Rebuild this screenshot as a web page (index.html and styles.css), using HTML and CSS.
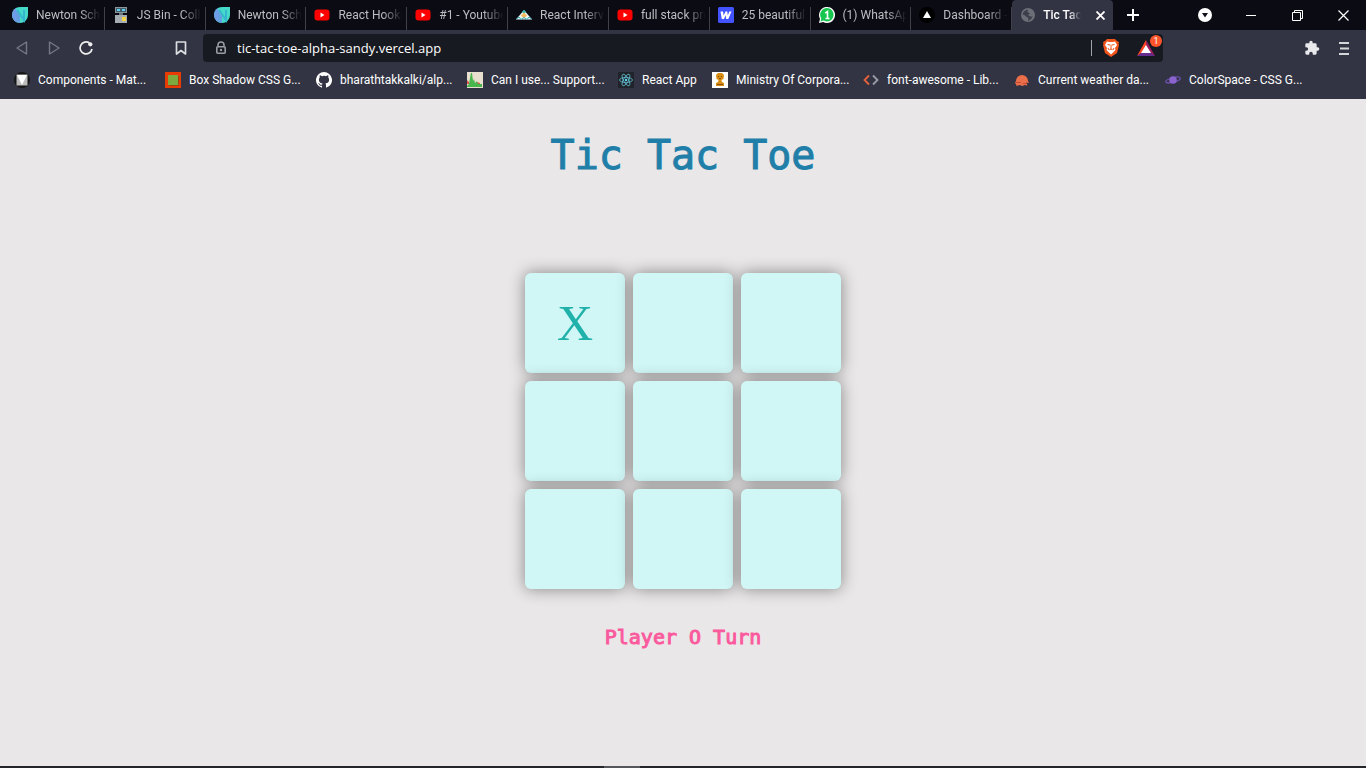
FILE: index.html
```html
<!DOCTYPE html>
<html lang="en">
<head>
<meta charset="utf-8">
<meta name="viewport" content="width=device-width, initial-scale=1">
<title>Tic Tac Toe</title>
<link rel="stylesheet" href="styles.css">
</head>
<body>
<svg class="defs" aria-hidden="true">
  <symbol id="newton" viewBox="0 0 16 16"><path d="M8 0h8v8a8 8 0 1 1-8-8z" fill="#45d9c7"/><path d="M4 1.100v13.800A8 8 0 0 1 4 1.100z" fill="#709be8"/><path d="M5 3l7 10V3" fill="none" stroke="#35b5cf" stroke-width="2"/><path d="M4 3l4 6v7l-4-1z" fill="#669fdf"/></symbol>
  <symbol id="youtube" viewBox="0 0 16 16"><rect y="2.500" x=".5" width="15" height="11" rx="3" fill="#f00"/><path d="M6.500 5.500v5l4-2.500z" fill="#fff"/></symbol>
</svg>
<header class="browser">
  <div class="titlebar">
    <nav class="tabs" aria-label="Tabs">
      <a class="tab" href="#"><svg class="icon"><use href="#newton"/></svg><span>Newton Sch</span></a>
      <a class="tab" href="#"><svg class="icon" viewBox="0 0 16 16"><path d="M2 0h12v6H2z" fill="#8a959c"/><path d="M3 1h10v4H3z" fill="#435b68"/><path d="M4 2h3v2H4zM9 2h3v2H9z" fill="#5ed1f2"/><path d="M6 6h4v2H6z" fill="#65737b"/><path d="M2 8h12v8H2z" fill="#a5adb2"/><path d="M9 10h4v4H9z" fill="#f4d443"/></svg><span>JS Bin - Colla</span></a>
      <a class="tab" href="#"><svg class="icon"><use href="#newton"/></svg><span>Newton Sch</span></a>
      <a class="tab" href="#"><svg class="icon"><use href="#youtube"/></svg><span>React Hooks</span></a>
      <a class="tab" href="#"><svg class="icon"><use href="#youtube"/></svg><span>#1 - Youtube</span></a>
      <a class="tab" href="#"><svg class="icon" viewBox="0 0 16 16"><path d="M8 3l8 9.500H0z" fill="#e9f4ee"/><path d="M6 5l2-2 2 2-2 2z" fill="#30b7b2"/><path d="M8 5.500l3 3-3 3-3-3z" fill="#f5b95d"/><path d="M0 12.500l3-2.500 2 2.500 3-2 3 2 2-2.500 3 2.500" fill="none" stroke="#35a9bd"/></svg><span>React Intervi</span></a>
      <a class="tab" href="#"><svg class="icon"><use href="#youtube"/></svg><span>full stack pro</span></a>
      <a class="tab" href="#"><svg class="icon" viewBox="0 0 16 16"><rect width="16" height="16" rx="1.500" fill="#4353ff"/><path d="M2.500 4.500H5l.7 4L7.500 4.500H9.300l.5 4 1.500-4H13.500L10.300 12H8.200L7.700 8.300 6 12H3.800z" fill="#fff"/></svg><span>25 beautifull</span></a>
      <a class="tab" href="#"><svg class="icon" viewBox="0 0 16 16"><path d="M0 16l1-4.200A8 8 0 1 1 4.200 15z" fill="#fff"/><path d="M1.500 14.500l.8-3A6.700 6.700 0 1 1 4.600 13.600z" fill="#17c64f"/><path d="M6.200 6.200L8.500 4.500v7M6.500 11.500h4" fill="none" stroke="#fff" stroke-width="1.600"/></svg><span>(1) WhatsAp</span></a>
      <a class="tab" href="#"><svg class="icon" viewBox="0 0 16 16"><circle cx="8" cy="8" r="8" fill="#000"/><path d="M8 4l4 7H4z" fill="#fff"/></svg><span>Dashboard -</span></a>
      <div class="tab active"><svg class="icon" viewBox="0 0 16 16"><circle cx="8" cy="8" r="7" fill="#6b6e76"/><path d="M2.500 7.500C3 5 5 3 8 2.500L7.500 5 10 6.500 8 8l2 1.500h2.500L11 12l-3 2 .5-3L6 9.500 4.500 8z" fill="#3b3e4b"/></svg><span>Tic Tac T</span><button class="tab-close" aria-label="Close tab"><svg viewBox="0 0 9 9" width="9" height="9"><path d="M.5.5l8 8m0-8l-8 8" stroke="#fff" stroke-width="1.800"/></svg></button></div>
    </nav>
    <button class="new-tab" aria-label="New tab"><svg viewBox="0 0 12 12" width="12" height="12"><path d="M6 0v12M0 6h12" stroke="#fff" stroke-width="2"/></svg></button>
    <div class="window-controls">
      <button aria-label="Search tabs"><svg viewBox="0 0 14 14" width="14" height="14"><circle cx="7" cy="7" r="7" fill="#fff"/><path d="M4 5h6L7 9.500z" fill="#10101a"/></svg></button>
      <button aria-label="Minimize"><svg viewBox="0 0 11 11" width="11" height="11"><path d="M0 5.500h10" stroke="#fff"/></svg></button>
      <button aria-label="Restore"><svg viewBox="0 0 11 11" width="11" height="11" fill="none" stroke="#fff"><path d="M.5 2.500h8v8h-8zM2.500 2V.5h8v8H9"/></svg></button>
      <button aria-label="Close"><svg viewBox="0 0 11 11" width="11" height="11"><path d="M.5.5l10 10m0-10l-10 10" stroke="#fff" stroke-width="1.200"/></svg></button>
    </div>
  </div>
  <div class="toolbar">
    <button class="tool" aria-label="Back" disabled><svg class="icon" viewBox="0 0 16 16"><path d="M12.500 2v12L3 8z" fill="none" stroke="#747785" stroke-width="1.400" stroke-linejoin="round"/></svg></button>
    <button class="tool" aria-label="Forward" disabled><svg class="icon" viewBox="0 0 16 16"><path d="M3.500 2v12L13 8z" fill="none" stroke="#747785" stroke-width="1.400" stroke-linejoin="round"/></svg></button>
    <button class="tool" aria-label="Reload"><svg class="icon" viewBox="0 0 16 16"><path d="M11.500 3A6 6 0 1 0 14 9" fill="none" stroke="#eee" stroke-width="1.700"/><circle cx="12.300" cy="4.300" r="2.100" fill="#eee"/></svg></button>
    <button class="tool save" aria-label="Bookmark"><svg class="icon" viewBox="0 0 16 16"><path d="M3.500 2h9v12L8 10.500 3.500 14z" fill="none" stroke="#dcdde1" stroke-width="1.700" stroke-linejoin="round"/></svg></button>
    <div class="address">
      <svg class="icon" viewBox="0 0 16 16"><path d="M5 7V5a3 3 0 0 1 6 0v2" fill="none" stroke="#9b9da5" stroke-width="1.500"/><rect x="3.800" y="6.800" width="8.400" height="6.500" rx="1" fill="none" stroke="#9b9da5" stroke-width="1.600"/><circle cx="8" cy="10" r="1.200" fill="#9b9da5"/></svg>
      <input type="text" aria-label="Address" value="tic-tac-toe-alpha-sandy.vercel.app">
      <span class="divider"></span>
      <button aria-label="Brave Shields"><svg viewBox="0 0 16 18" width="16" height="18"><path d="M4 0h8l2 2 2 1-.5 2 .5 1-2 8-6 4-6-4L0 6l.5-1L0 3l2-1z" fill="#f2541b"/><path d="M4 2.500l2 .5h4l2-.5L14 6l-2 3 .5 2L8 15.500 3.500 11 4 9 2 6z" fill="#fff"/><path d="M4.500 5.500L7 6M11.500 5.500L9 6M5 9l1 2M11 9l-1 2M8 5.500V10l-1.500.8M8 10l1.500.8" fill="none" stroke="#f2541b"/></svg></button>
      <button class="rewards" aria-label="Brave Rewards, 1 notification"><svg viewBox="0 0 18 16" width="18" height="16"><path d="M9 0L0 16l9-6z" fill="#ff4724"/><path d="M9 0l9 16-9-6z" fill="#9e1f63"/><path d="M0 16h18l-9-6z" fill="#662d91"/><path d="M9 5l5 8H4z" fill="#fff"/></svg><span>1</span></button>
    </div>
    <div class="menu-tools">
      <button aria-label="Extensions"><svg class="icon" viewBox="0 0 24 24"><path d="M20.500 11H19V7a2 2 0 0 0-2-2h-4V3.500a2.500 2.500 0 0 0-5 0V5H4a2 2 0 0 0-2 2v3.800h1.500a2.700 2.700 0 0 1 0 5.400H2V20a2 2 0 0 0 2 2h3.800v-1.500a2.700 2.700 0 0 1 5.400 0V22H17a2 2 0 0 0 2-2v-4h1.500a2.500 2.500 0 0 0 0-5z" fill="#e9e9ec"/></svg></button>
      <button aria-label="Menu"><svg viewBox="0 0 10 13" width="10" height="13"><path d="M0 1h10M1 6.500h9M0 12h10" stroke="#d5d6da" stroke-width="1.800"/></svg></button>
    </div>
  </div>
  <nav class="bookmarks" aria-label="Bookmarks">
    <a href="#"><svg class="icon" viewBox="0 0 16 16"><circle cx="8" cy="8" r="8" fill="#171717"/><path d="M2.500 2.500h11v11h-11z" fill="#bbb"/><path d="M3 3h10L8 13z" fill="#fff"/></svg><span>Components - Mat...</span></a>
    <a href="#"><svg class="icon" viewBox="0 0 16 16"><path d="M0 0h16v16H0z" fill="#e93b04"/><path d="M4 4h10v10H4z" fill="#9a4411"/><path d="M3 3h10v10H3z" fill="#7caa3e"/></svg><span>Box Shadow CSS G...</span></a>
    <a href="#"><svg class="icon" viewBox="0 0 16 16"><path fill="#fff" d="M8 0a8 8 0 0 0-2.530 15.590c.4.070.55-.17.55-.38v-1.490c-2.230.48-2.690-.94-2.690-.94-.36-.92-.89-1.170-.89-1.170-.73-.5.050-.49.050-.49.810.060 1.230.83 1.230.83.720 1.230 1.870.87 2.330.66.070-.52.280-.87.510-1.070-1.780-.2-3.640-.89-3.640-3.950 0-.87.310-1.590.82-2.150-.08-.2-.36-1.020.080-2.120 0 0 .67-.21 2.200.82A7.500 7.500 0 0 1 8 3.870c.68 0 1.360.09 2 .27 1.530-1.040 2.200-.82 2.200-.82.440 1.100.160 1.920.080 2.120.51.56.82 1.270.82 2.150 0 3.070-1.870 3.750-3.650 3.950.29.25.54.73.54 1.480v2.190c0 .21.150.46.550.38A8 8 0 0 0 8 0z"/></svg><span>bharathtakkalki/alp...</span></a>
    <a href="#"><svg class="icon" viewBox="0 0 16 16"><path d="M0 0h16v16H0z" fill="#e9dfcf"/><path d="M0 8l2 2 1 2H0zM10 10l3 1v2h-3z" fill="#d85c49"/><path d="M0 14l2-2 1-6 1-5h1l1 8 1-2 1 4 2-2 1 3h4v3H0z" fill="#49b64d"/></svg><span>Can I use... Support...</span></a>
    <a href="#" class="compact"><svg class="icon" viewBox="0 0 16 16"><rect width="16" height="16" rx="1" fill="#20232a"/><g fill="none" stroke="#61bed0" stroke-width=".8"><ellipse cx="8" cy="8" rx="6.500" ry="2.500"/><ellipse cx="8" cy="8" rx="6.500" ry="2.500" transform="rotate(60 8 8)"/><ellipse cx="8" cy="8" rx="6.500" ry="2.500" transform="rotate(120 8 8)"/></g><circle cx="8" cy="8" r="1.200" fill="#61dafb"/></svg><span>React App</span></a>
    <a href="#"><svg class="icon" viewBox="0 0 16 16"><path d="M0 0h16v16H0z" fill="#fff"/><path d="M6 1h4l2 2-.5 4-2 1 .5 2 2 1v3H4v-3l2-1 .5-2-2-1L4 3z" fill="#d98e12"/><path d="M6 4h1v1H6zm3 0h1v1H9zM7 6h2v1H7zM5 12h6v1H5z" fill="#875116"/></svg><span>Ministry Of Corpora...</span></a>
    <a href="#"><svg class="icon" viewBox="0 0 16 16"><path d="M6 3.500L1.500 8 6 12.500" fill="none" stroke="#e5623d" stroke-width="1.800"/><path d="M10 3.500l4.500 4.500-4.500 4.500" fill="none" stroke="#9b9da6" stroke-width="1.800"/></svg><span>font-awesome - Lib...</span></a>
    <a href="#"><svg class="icon" viewBox="0 0 16 16"><path d="M2 9a6 6 0 1 1 12 0l1 2-3-.5 1.500 3-3-.5-2 1-3-1-3 1-.5-2-1-1z" fill="#eb6e4b"/><path d="M2 10.500h5M9 11.500h4" stroke="#c74b31"/></svg><span>Current weather da...</span></a>
    <a href="#"><svg class="icon" viewBox="0 0 16 16"><ellipse cx="8" cy="8" rx="7.500" ry="2.300" transform="rotate(-14 8 8)" fill="none" stroke="#6e50b1" stroke-width="1.300"/><circle cx="8" cy="8" r="3.800" fill="#8a63cf"/></svg><span>ColorSpace - CSS G...</span></a>
  </nav>
</header>
<main class="game">
  <h1>Tic Tac Toe</h1>
  <div class="board">
    <button class="cell" aria-label="Row 1, column 1: X">X</button>
    <button class="cell" aria-label="Row 1, column 2"></button>
    <button class="cell" aria-label="Row 1, column 3"></button>
    <button class="cell" aria-label="Row 2, column 1"></button>
    <button class="cell" aria-label="Row 2, column 2"></button>
    <button class="cell" aria-label="Row 2, column 3"></button>
    <button class="cell" aria-label="Row 3, column 1"></button>
    <button class="cell" aria-label="Row 3, column 2"></button>
    <button class="cell" aria-label="Row 3, column 3"></button>
  </div>
  <p class="status">Player O Turn</p>
</main>
<footer class="taskbar"><span></span></footer>
</body>
</html>
```
FILE: styles.css
```css
* { box-sizing: border-box; }
body {
  margin: 0;
  min-height: 100vh;
  display: flex;
  flex-direction: column;
  background: #e9e7e8;
  font-family: Roboto, "Open Sans", sans-serif;
  font-size: 12px;
  line-height: 16px;
}
button { border: 0; padding: 0; background: none; font: inherit; }
a { color: inherit; text-decoration: none; }
svg { display: block; flex: none; }
.defs { position: absolute; width: 0; height: 0; }
.icon { width: 16px; height: 16px; }
.browser { background: #323443; color: #fff; }
.titlebar { display: flex; height: 30px; padding-left: 4px; background: #0b0b14; }
.tabs { display: flex; flex: 0 1 1109px; min-width: 0; }
.tab {
  display: flex;
  flex: 1 1 0;
  min-width: 0;
  align-items: center;
  gap: 8px;
  padding: 0 1px 0 8px;
  color: #bdbdc2;
  background: linear-gradient(#404048, #404048) right bottom / 1px 23px no-repeat;
}
.tab > span {
  flex: 1;
  min-width: 0;
  overflow: hidden;
  white-space: nowrap;
  mask-image: linear-gradient(to right, #000 65%, transparent 95%);
}
.tab.active { gap: 7px; background: #323443; color: #fff; font-weight: 500; border-radius: 4px 4px 0 0; }
.tab-close { display: grid; place-items: center; width: 22px; }
.new-tab { display: grid; place-items: center; width: 40px; }
.window-controls { display: flex; margin-left: auto; }
.window-controls button { display: grid; place-items: center; width: 46px; }
.toolbar { display: flex; align-items: center; height: 36px; padding-left: 6px; }
.tool { display: grid; place-items: center; width: 32px; height: 28px; }
.save { margin-left: 63px; }
.address {
  display: flex;
  flex: 1;
  min-width: 0;
  align-items: center;
  gap: 8px;
  height: 28px;
  margin-left: 6px;
  padding: 0 8px 0 10px;
  border-radius: 4px;
  background: #181a21;
}
.address input {
  flex: 1;
  min-width: 0;
  border: 0;
  padding: 0;
  background: none;
  color: #fff;
  font: 13px/16px "Open Sans", sans-serif;
  outline: 0;
}
.divider { width: 1px; height: 16px; margin-right: 3px; background: #a2a3a8; }
.rewards { position: relative; margin-left: 10px; }
.rewards span {
  position: absolute;
  top: -5px;
  right: -7px;
  width: 12px;
  height: 12px;
  border-radius: 50%;
  background: #fb542b;
  color: #fff;
  font-size: 9px;
  line-height: 12px;
}
.menu-tools { display: flex; align-items: center; gap: 19px; padding: 0 17px 0 141px; }
.bookmarks { display: flex; gap: 16px; height: 33px; padding: 6px 14px; overflow: hidden; }
.bookmarks a { display: flex; gap: 8px; height: 16px; align-items: center; white-space: nowrap; }
.bookmarks span { width: 111px; }
.bookmarks .compact span { width: 54px; }
.game { flex: 1; display: flex; flex-direction: column; align-items: center; font-family: "DejaVu Sans Mono", monospace; }
h1 {
  margin: 29px 0 91px;
  color: #1f7fa8;
  font-size: 40px;
  font-weight: 400;
  line-height: 54px;
  -webkit-text-stroke: 1px #1f7fa8;
}
.board { display: grid; grid-template-columns: repeat(3, 100px); grid-auto-rows: 100px; gap: 8px; }
.cell {
  border-radius: 6px;
  background: #d0f7f6;
  box-shadow: 0 0 16px rgba(0, 0, 0, 0.43);
  color: #20b2aa;
  font-family: "Liberation Serif", serif;
  font-size: 50px;
}
.status { margin: 34px 0; color: #fb5a9d; font-size: 20px; line-height: 28px; -webkit-text-stroke: 1px #fb5a9d; }
.taskbar { height: 2px; background: #24262a; }
.taskbar span { display: block; width: 36px; height: 2px; margin-left: 604px; background: #55575a; }
```
